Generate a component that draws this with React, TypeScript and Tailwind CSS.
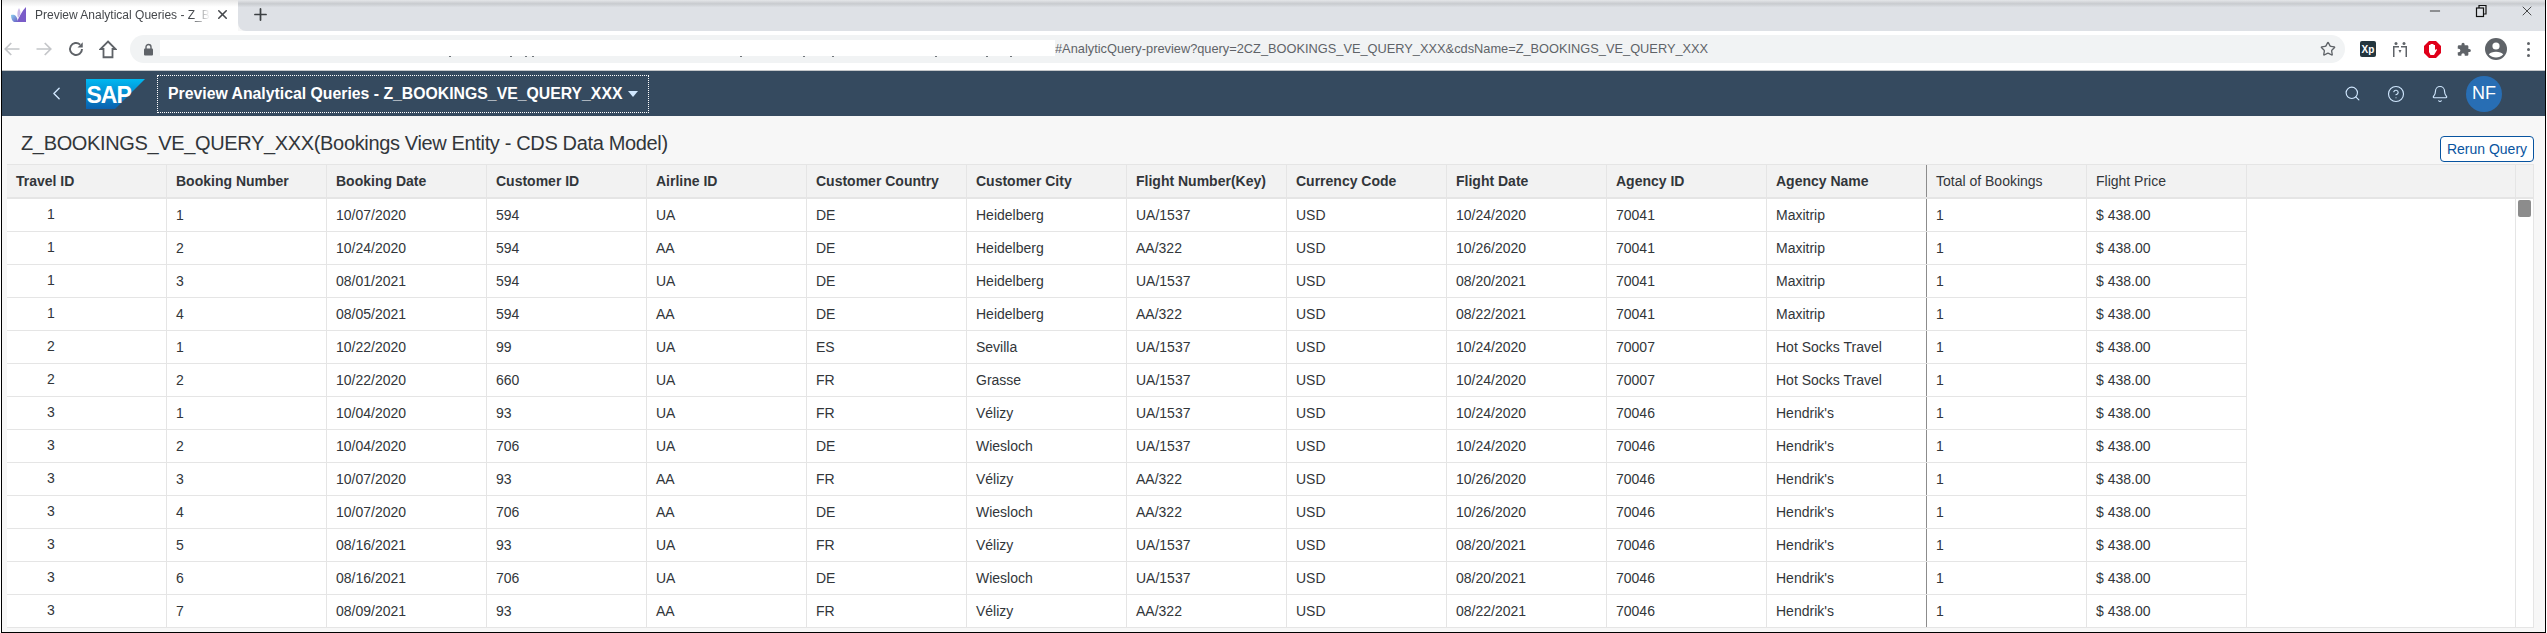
import React from "react";
import { X, Plus, Search, Star, ChevronLeft, Minus, Bell, CircleHelp } from "lucide-react";

const COLUMNS = [
  "Travel ID",
  "Booking Number",
  "Booking Date",
  "Customer ID",
  "Airline ID",
  "Customer Country",
  "Customer City",
  "Flight Number(Key)",
  "Currency Code",
  "Flight Date",
  "Agency ID",
  "Agency Name",
  "Total of Bookings",
  "Flight Price",
];

const ROWS = [
  ["1", "1", "10/07/2020", "594", "UA", "DE", "Heidelberg", "UA/1537", "USD", "10/24/2020", "70041", "Maxitrip"],
  ["1", "2", "10/24/2020", "594", "AA", "DE", "Heidelberg", "AA/322", "USD", "10/26/2020", "70041", "Maxitrip"],
  ["1", "3", "08/01/2021", "594", "UA", "DE", "Heidelberg", "UA/1537", "USD", "08/20/2021", "70041", "Maxitrip"],
  ["1", "4", "08/05/2021", "594", "AA", "DE", "Heidelberg", "AA/322", "USD", "08/22/2021", "70041", "Maxitrip"],
  ["2", "1", "10/22/2020", "99", "UA", "ES", "Sevilla", "UA/1537", "USD", "10/24/2020", "70007", "Hot Socks Travel"],
  ["2", "2", "10/22/2020", "660", "UA", "FR", "Grasse", "UA/1537", "USD", "10/24/2020", "70007", "Hot Socks Travel"],
  ["3", "1", "10/04/2020", "93", "UA", "FR", "Vélizy", "UA/1537", "USD", "10/24/2020", "70046", "Hendrik's"],
  ["3", "2", "10/04/2020", "706", "UA", "DE", "Wiesloch", "UA/1537", "USD", "10/24/2020", "70046", "Hendrik's"],
  ["3", "3", "10/07/2020", "93", "AA", "FR", "Vélizy", "AA/322", "USD", "10/26/2020", "70046", "Hendrik's"],
  ["3", "4", "10/07/2020", "706", "AA", "DE", "Wiesloch", "AA/322", "USD", "10/26/2020", "70046", "Hendrik's"],
  ["3", "5", "08/16/2021", "93", "UA", "FR", "Vélizy", "UA/1537", "USD", "08/20/2021", "70046", "Hendrik's"],
  ["3", "6", "08/16/2021", "706", "UA", "DE", "Wiesloch", "UA/1537", "USD", "08/20/2021", "70046", "Hendrik's"],
  ["3", "7", "08/09/2021", "93", "AA", "FR", "Vélizy", "AA/322", "USD", "08/22/2021", "70046", "Hendrik's"],
];

// bits of the masked url that stick out under the white box (offset from box left)
const URL_TICKS = [289, 350, 365, 372, 580, 643, 672, 775, 826, 850];

function TabIcon() {
  return (
    <svg width="16" height="16" viewBox="0 0 16 16" className="shrink-0">
      <defs>
        <linearGradient id="tabA" x1="0" y1="0" x2="1" y2="1">
          <stop offset="0" stopColor="#8ad0ee" />
          <stop offset="1" stopColor="#6a5bc4" />
        </linearGradient>
      </defs>
      <path d="M15 0 L15 15 L6 15 C8 10 11 4 15 0 Z" fill="#7a5cc8" />
      <path d="M8 1 C10 4 10 8 7 11 C6 8 6 4 8 1 Z" fill="#c9b6e8" />
      <path d="M0 8 C3 7 6 8 7 15 L3 15 C1 14 0 11 0 8 Z" fill="url(#tabA)" />
    </svg>
  );
}

function SapLogo() {
  return (
    <svg width="59" height="30" viewBox="0 0 59 30" className="shrink-0">
      <defs>
        <linearGradient id="sapBlue" x1="0" y1="0" x2="0" y2="1">
          <stop offset="0" stopColor="#00b8f1" />
          <stop offset="1" stopColor="#0a60ae" />
        </linearGradient>
      </defs>
      <path d="M0 0 H59 L29 30 H0 Z" fill="url(#sapBlue)" />
      <text x="0.5" y="24" fontFamily="Liberation Sans" fontWeight="700" fontSize="23" letterSpacing="-1" fill="#ffffff">
        SAP
      </text>
    </svg>
  );
}

function BrowserChrome() {
  return (
    <>
      {/* Tab strip */}
      <div className="flex h-[31px] shrink-0">
        <div className="flex w-[236px] shrink-0 items-center bg-[linear-gradient(#e6e6e6,#ffffff_22%)] pb-[2px] pl-[9px]">
          <TabIcon />
          <span className="ml-[8px] w-[175px] overflow-hidden whitespace-nowrap text-[12px] text-[#45484c] [mask-image:linear-gradient(to_right,black_90%,transparent)]">
            Preview Analytical Queries - Z_BOOKINGS_VE_QUERY_XXX
          </span>
          <X className="ml-[5px] h-[15px] w-[15px] text-[#45484c]" strokeWidth={2.5} />
        </div>
        <div className="flex flex-1 items-center rounded-bl-[8px] bg-[linear-gradient(#e4e6e9,#c8cbcf_12%,#dee1e6_24%)]">
          <Plus className="mb-[3px] ml-[13px] h-[19px] w-[19px] text-[#3c4043]" strokeWidth={2.2} />
          <div className="ml-auto flex items-center pb-[9px] pr-[10px]">
            <Minus className="h-[16px] w-[16px] text-[#111111]" strokeWidth={1.2} />
            <svg width="14" height="14" viewBox="0 0 14 14" className="ml-[31px]" fill="none" stroke="#111111" strokeWidth="1.2">
              <rect x="2.5" y="4" width="7" height="8.5" />
              <path d="M5 4 V1.5 H12 V10 H9.5" />
            </svg>
            <X className="ml-[31px] h-[16px] w-[16px] text-[#111111]" strokeWidth={1.1} />
          </div>
        </div>
      </div>
      {/* Toolbar */}
      <div className="flex h-[40px] shrink-0 items-center border-b border-[#c4c7ca] bg-white pb-[3px]">
        <svg width="18" height="18" viewBox="0 0 24 24" className="ml-[1px]" fill="none" stroke="#c4c6c9" strokeWidth="2.3">
          <path d="M22 12 H3 M11 4 L3 12 L11 20" />
        </svg>
        <svg width="18" height="18" viewBox="0 0 24 24" className="ml-[14px]" fill="none" stroke="#c4c6c9" strokeWidth="2.3">
          <path d="M2 12 H21 M13 4 L21 12 L13 20" />
        </svg>
        <svg width="18" height="18" viewBox="0 0 24 24" className="ml-[14px]" fill="none" stroke="#5f6368" strokeWidth="2.6">
          <path d="M20 12 A8 8 0 1 1 17.5 6.2" />
          <path d="M21 3 V10 H14 Z" fill="#5f6368" stroke="none" />
        </svg>
        <svg width="18" height="20" viewBox="0 0 24 26" className="ml-[14px]" fill="none" stroke="#5f6368" strokeWidth="2.4">
          <path d="M12 3 L22 13 H18 V24 H6 V13 H2 Z" />
        </svg>
        <div className="ml-[13px] flex h-[28px] w-[2215px] shrink-0 items-center rounded-full bg-[#f1f3f4] pl-[13px]">
          <svg width="11" height="13" viewBox="0 0 11 13" className="shrink-0">
            <path d="M3 6 V4 A2.5 2.5 0 0 1 8 4 V6" fill="none" stroke="#5f6368" strokeWidth="1.4" />
            <rect x="1" y="5.5" width="9" height="7" rx="1" fill="#5f6368" />
          </svg>
          <div className="relative mb-[3px] ml-[6px] h-[16px] w-[895px] shrink-0 bg-white">
            {URL_TICKS.map((left) => (
              <span key={left} className="absolute top-[16px] h-[1px] w-[2px] bg-[#70757a]" style={{ left }} />
            ))}
          </div>
          <span className="whitespace-nowrap text-[12.8px] text-[#5f6368]">
            #AnalyticQuery-preview?query=2CZ_BOOKINGS_VE_QUERY_XXX&amp;cdsName=Z_BOOKINGS_VE_QUERY_XXX
          </span>
          <Star className="ml-auto mr-[9px] h-[16px] w-[16px] text-[#5f6368]" strokeWidth={2} />
        </div>
        <div className="ml-[15px] flex h-[16px] w-[16px] shrink-0 items-center justify-center rounded-[2px] bg-[#24363f] text-[10px] font-bold text-white">
          Xp
        </div>
        <svg width="16" height="16" viewBox="0 0 16 16" className="ml-[16px] shrink-0" fill="#5f6368">
          <circle cx="4" cy="2.5" r="1.5" />
          <circle cx="12" cy="2.5" r="1.5" />
          <path d="M1 5 H7 V6.5 H2.5 V16 H1 Z M9 5 H15 V16 H13.5 V6.5 H9 Z M6.5 9 H9.5 L8 12 Z" />
        </svg>
        <svg width="17" height="17" viewBox="0 0 17 17" className="ml-[16px] shrink-0">
          <path d="M5 0 H12 L17 5 V12 L12 17 H5 L0 12 V5 Z" fill="#e0001a" />
          <path d="M5 8 V4 H6.5 V7 V3 H8 V7 V3 H9.5 V7 V4 H11 V9 L12.5 8 L13 9 L10 14 H6.5 L5 11 Z" fill="#ffffff" />
        </svg>
        <svg width="16" height="15" viewBox="0 0 24 24" className="ml-[15px] shrink-0" fill="#5f6368">
          <path d="M20.5 11H19V7a2 2 0 0 0-2-2h-4V3.5a2.5 2.5 0 0 0-5 0V5H4a2 2 0 0 0-2 2v3.8h1.5a2.7 2.7 0 0 1 0 5.4H2V20a2 2 0 0 0 2 2h3.8v-1.5a2.7 2.7 0 0 1 5.4 0V22H17a2 2 0 0 0 2-2v-4h1.5a2.5 2.5 0 0 0 0-5z" />
        </svg>
        <svg width="22" height="22" viewBox="0 0 22 22" className="ml-[13px] shrink-0">
          <circle cx="11" cy="11" r="11" fill="#5f6368" />
          <circle cx="11" cy="8" r="3.6" fill="#ffffff" />
          <path d="M3.8 16.5 C6 12.8 16 12.8 18.2 16.5 C14.5 20.4 7.5 20.4 3.8 16.5 Z" fill="#ffffff" />
        </svg>
        <div className="ml-[20px] flex flex-col gap-[3px]">
          <span className="h-[3px] w-[3px] rounded-full bg-[#5f6368]" />
          <span className="h-[3px] w-[3px] rounded-full bg-[#5f6368]" />
          <span className="h-[3px] w-[3px] rounded-full bg-[#5f6368]" />
        </div>
      </div>
    </>
  );
}

function ShellBar() {
  return (
    <div className="flex h-[45px] shrink-0 items-center bg-[#354a5f] text-white">
      <ChevronLeft className="ml-[44px] h-[21px] w-[21px] text-[#d1e8ff]" strokeWidth={1.6} />
      <div className="ml-[19px]">
        <SapLogo />
      </div>
      <div className="ml-[12px] flex h-[38px] w-[492px] items-center border border-dotted border-white pl-[10px]">
        <span className="whitespace-nowrap text-[15.8px] font-bold">Preview Analytical Queries - Z_BOOKINGS_VE_QUERY_XXX</span>
        <span className="ml-[6px] mt-[1px] h-0 w-0 border-x-[5px] border-t-[6px] border-x-transparent border-t-[#d1e8ff]" />
      </div>
      <div className="ml-auto flex items-center text-[#d1e8ff]">
        <Search className="h-[17px] w-[17px]" strokeWidth={1.6} />
        <CircleHelp className="ml-[26px] h-[18px] w-[18px]" strokeWidth={1.5} />
        <Bell className="ml-[26px] h-[18px] w-[18px]" strokeWidth={1.5} />
        <div className="ml-[17px] mr-[43px] flex h-[36px] w-[36px] items-center justify-center rounded-full bg-[#286eb4] text-[18px] text-white">
          NF
        </div>
      </div>
    </div>
  );
}

function HeaderCell({ label, index }: { label: string; index: number }) {
  const measure = index >= 12;
  return (
    <div
      className={`flex w-[160px] shrink-0 items-center pl-[9px] text-[14px] border-r ${
        index === 11 ? "border-[#8c8c8c]" : "border-[#e5e5e5]"
      } ${measure ? "font-normal" : "font-bold"}`}
    >
      {label}
    </div>
  );
}

function DataRow({ cells }: { cells: string[] }) {
  return (
    <div className="flex h-[33px] border-b border-[#e5e5e5]">
      {[...cells, "1", "$ 438.00"].map((value, i) => (
        <div
          key={i}
          className={`flex w-[160px] shrink-0 items-center border-r text-[14px] ${
            i === 11 ? "border-[#8c8c8c]" : "border-[#e5e5e5]"
          } ${i === 0 ? "pb-[2px] pl-[40px]" : "pl-[9px] pt-[1px]"}`}
        >
          {value}
        </div>
      ))}
    </div>
  );
}

function QueryTable() {
  return (
    <div className="ml-[5px] mr-[11px] flex flex-col border-t border-[#e5e5e5]">
      <div className="flex h-[34px] border-b-2 border-[#e5e5e5] bg-[#f2f2f2]">
        {COLUMNS.map((col, i) => (
          <HeaderCell key={col} label={col} index={i} />
        ))}
        <div className="flex-1 border-r border-[#e5e5e5]" />
        <div className="w-[18px] border-r border-[#e5e5e5]" />
      </div>
      <div className="flex bg-white">
        <div className="flex w-[2240px] flex-col">
          {ROWS.map((row, i) => (
            <DataRow key={i} cells={row} />
          ))}
        </div>
        <div className="flex-1 border-r border-b border-[#e5e5e5]" />
        <div className="w-[18px] border-r border-b border-[#e5e5e5] px-[2px] pt-px">
          <div className="h-[17px] rounded-[2px] bg-[#8c8c8c]" />
        </div>
      </div>
    </div>
  );
}

export default function App() {
  return (
    <div className="h-[633px] w-[2547px] overflow-hidden bg-white pl-px pr-px font-['Liberation_Sans',Arial,sans-serif] text-[#32363a]">
      <div className="flex h-[633px] flex-col border-x border-b border-black bg-[#f7f7f7]">
        <BrowserChrome />
        <ShellBar />
        <div className="flex h-[48px] shrink-0 items-center">
          <h1 className="ml-[19px] mt-[6px] text-[20px] font-normal tracking-[-0.35px]">
            Z_BOOKINGS_VE_QUERY_XXX(Bookings View Entity - CDS Data Model)
          </h1>
          <button className="ml-auto mr-[11px] mt-[18px] h-[26px] w-[94px] rounded-[4px] border border-[#0854a0] bg-white text-[14px] text-[#0854a0]">
            Rerun Query
          </button>
        </div>
        <QueryTable />
      </div>
    </div>
  );
}
